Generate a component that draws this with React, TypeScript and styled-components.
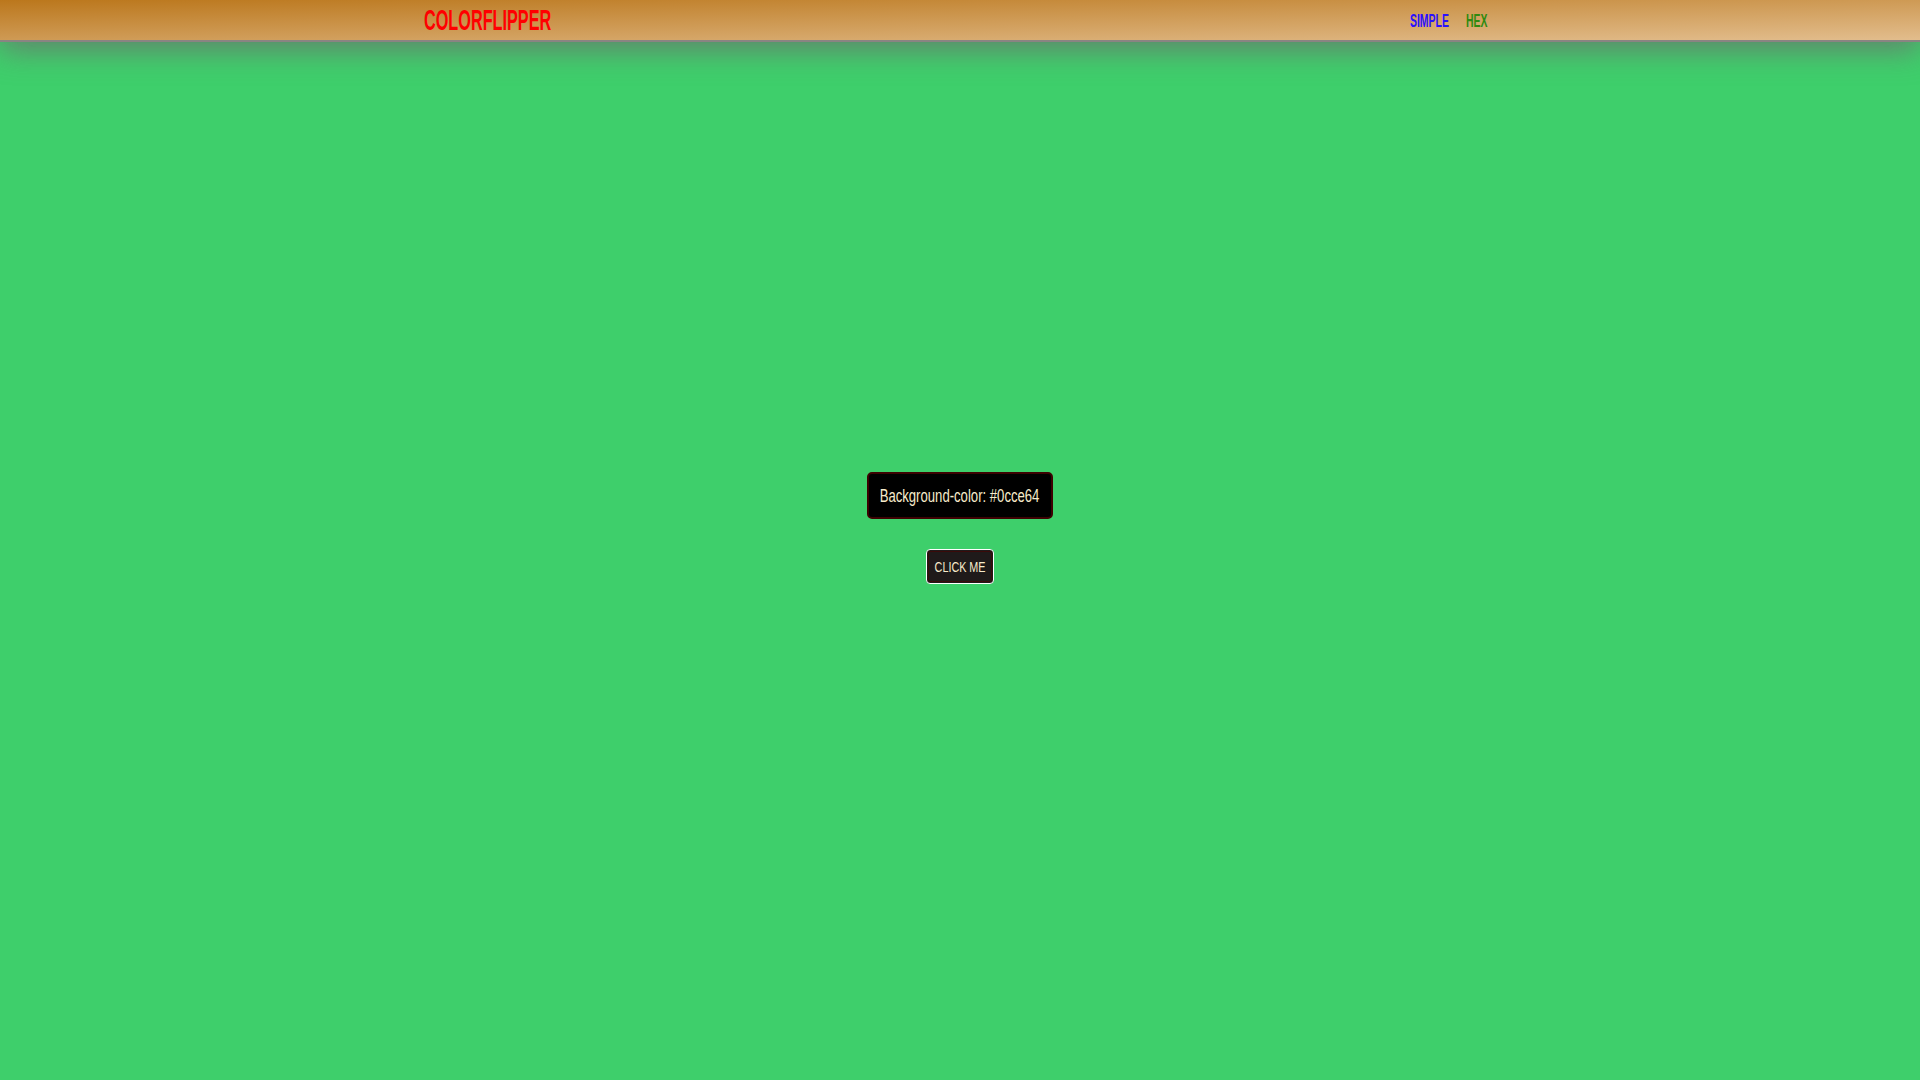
import React from "react";
import styled, { createGlobalStyle } from "styled-components";

const GlobalStyle = createGlobalStyle`
  html, body {
    margin: 0;
    padding: 0;
  }
  body {
    background: #3ecf6b;
    font-family: "Liberation Sans", Arial, sans-serif;
    min-height: 100vh;
  }
`;

const Page = styled.div`
  min-height: 100vh;
  background: #3ecf6b;
  display: flex;
  flex-direction: column;
`;

const NavBar = styled.nav`
  height: 40px;
  border-bottom: 2px solid #8a8482;
  background: linear-gradient(to bottom right, #bb771c, #e2bd8d);
  box-shadow: 0 8px 30px rgba(110, 110, 110, 0.8);
  position: relative;
  z-index: 1;
`;

const NavInner = styled.div`
  width: 1076px;
  height: 100%;
  margin: 0 auto;
  padding-left: 2px;
  box-sizing: border-box;
  display: flex;
  align-items: center;
  justify-content: space-between;
`;

const Logo = styled.span`
  display: inline-block;
  width: 129px;
  white-space: nowrap;
  font-family: "Liberation Sans", Arial, sans-serif;
  font-weight: 700;
  font-size: 29px;
  line-height: 1;
  color: #ff0000;
  transform: scaleX(0.56);
  transform-origin: left center;
  margin-top: 1px;
`;

const Links = styled.div`
  display: flex;
  align-items: center;
  gap: 17px;
  margin-right: 11px;
`;

const NavLink = styled.a<{ $color: string; $w: number }>`
  display: inline-block;
  width: ${(p) => p.$w}px;
  font-family: "Liberation Sans", Arial, sans-serif;
  font-weight: 700;
  font-size: 18px;
  line-height: 1;
  color: ${(p) => p.$color};
  text-decoration: none;
  white-space: nowrap;
  transform: scaleX(0.58);
  transform-origin: left center;
  margin-top: 2px;
  cursor: pointer;
`;

const Main = styled.main`
  flex: 1;
  display: flex;
  flex-direction: column;
  align-items: center;
  padding-top: 430px;
  gap: 30px;
`;

const ColorBox = styled.div`
  box-sizing: border-box;
  width: 186px;
  height: 47px;
  padding-top: 1px;
  display: flex;
  align-items: center;
  justify-content: center;
  background: #000000;
  border: 2px solid #3d0202;
  border-radius: 5px;
  color: #f7ebcb;
  font-size: 17.5px;
`;

const Squeeze = styled.span<{ $scale: number }>`
  display: inline-block;
  flex-shrink: 0;
  white-space: nowrap;
  transform: scaleX(${(p) => p.$scale});
  transform-origin: center;
`;

const FlipButton = styled.button`
  box-sizing: border-box;
  height: 35px;
  width: 68px;
  padding: 0;
  display: flex;
  align-items: center;
  justify-content: center;
  background: #1f1a1a;
  border: 1px solid #ffffff;
  outline: 1px solid #3a0a0a;
  outline-offset: -3px;
  border-radius: 4px;
  color: #f7ebcb;
  font-family: "Liberation Sans", Arial, sans-serif;
  font-size: 14px;
  cursor: pointer;
`;

export default function App() {
  return (
    <Page>
      <GlobalStyle />
      <NavBar>
        <NavInner>
          <Logo>COLORFLIPPER</Logo>
          <Links>
            <NavLink $color="#2a10ff" $w={39}>SIMPLE</NavLink>
            <NavLink $color="#2f8a10" $w={21}>HEX</NavLink>
          </Links>
        </NavInner>
      </NavBar>
      <Main>
        <ColorBox>
          <Squeeze $scale={0.75}>Background-color: #0cce64</Squeeze>
        </ColorBox>
        <FlipButton>
          <Squeeze $scale={0.77}>CLICK ME</Squeeze>
        </FlipButton>
      </Main>
    </Page>
  );
}
